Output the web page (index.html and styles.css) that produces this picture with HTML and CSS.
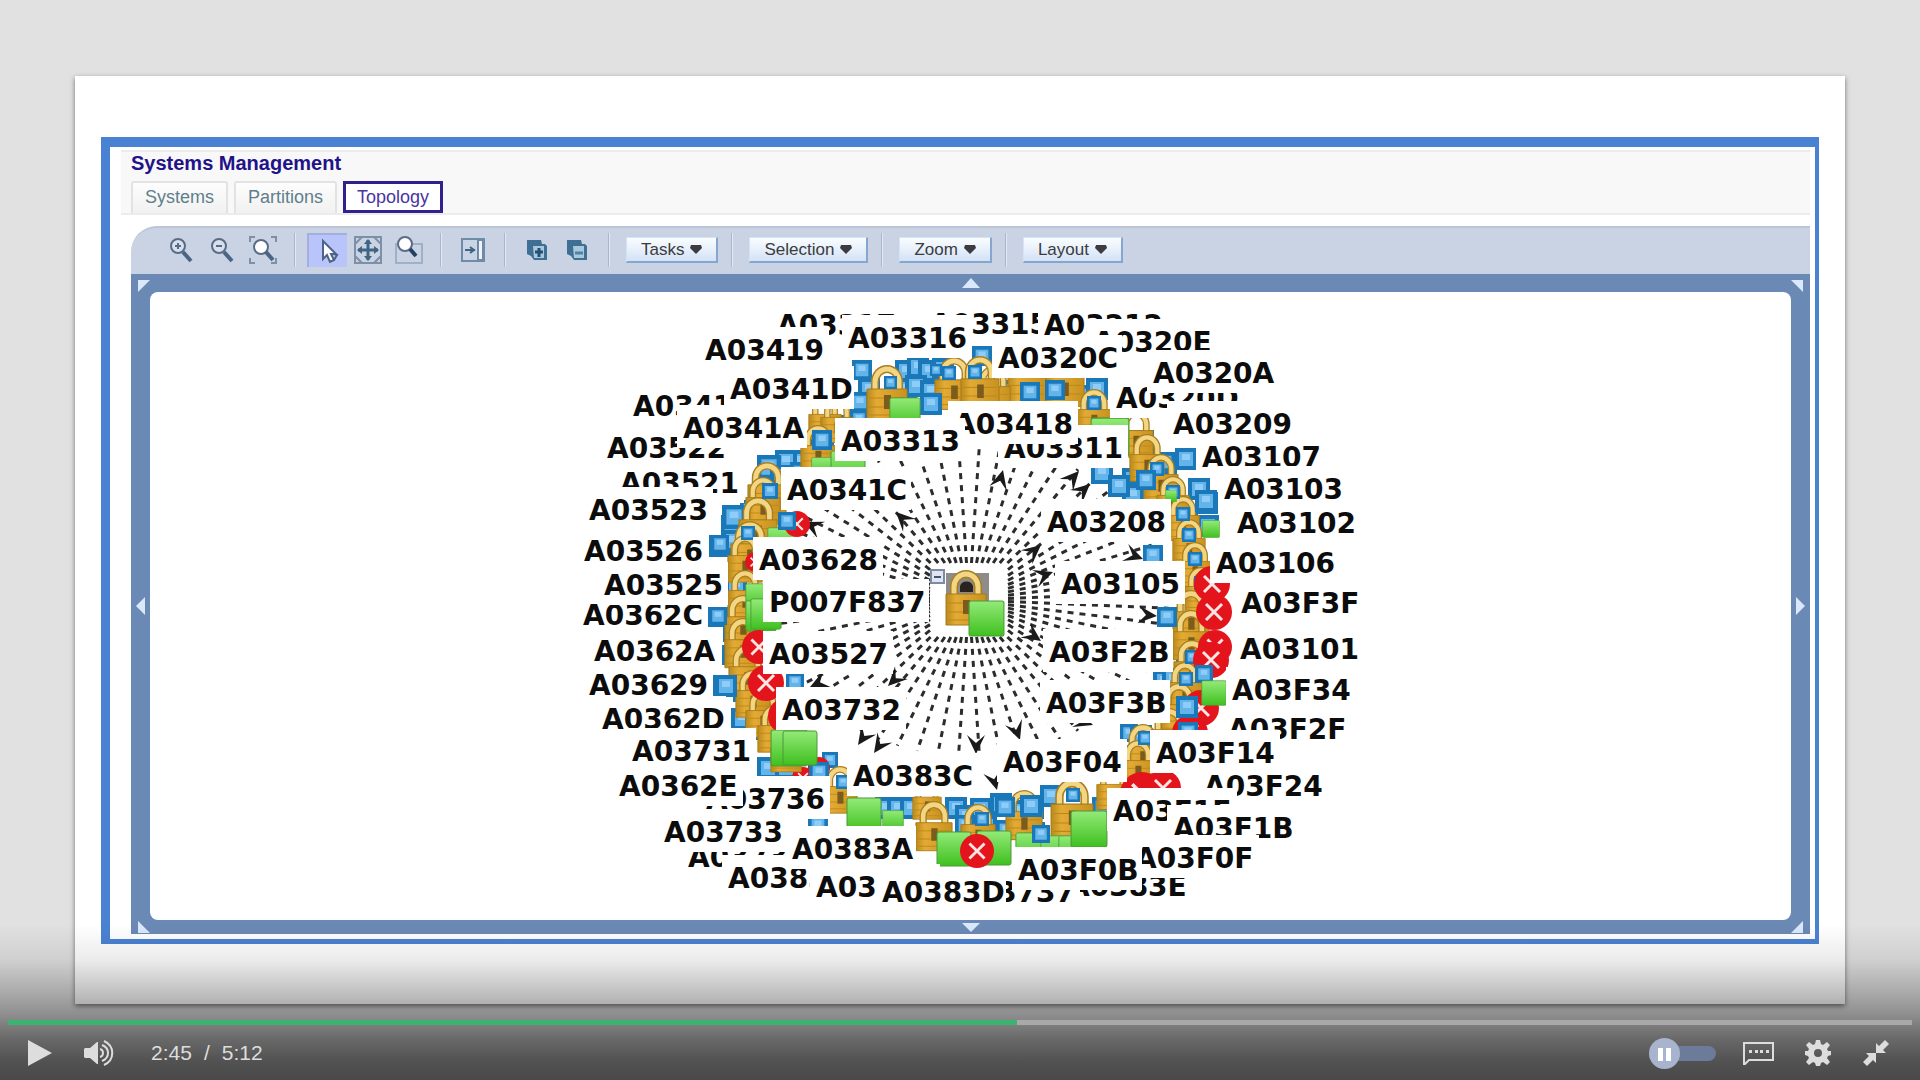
FILE: index.html
```html
<!DOCTYPE html>
<html lang="en">
<head>
<meta charset="utf-8">
<title>Systems Management - Topology</title>
<link rel="stylesheet" href="styles.css">
</head>
<body>
<main class="player">
  <article class="slide">
    <section class="window">
      <header class="window-head">
        <h1 class="title">Systems Management</h1>
        <nav class="tabs">
          <a class="tab" href="#systems">Systems</a>
          <a class="tab" href="#partitions">Partitions</a>
          <a class="tab tab-active" href="#topology">Topology</a>
        </nav>
      </header>
      <div class="toolbar">
        <div class="tools">
          <button class="tool" aria-label="Zoom in"><svg width="28" height="28" viewBox="0 0 28 28"><circle cx="11" cy="10" r="7" class="lens"/><path class="mark" d="M8 10h6M11 7v6"/><path class="handle" d="M16 16l8 9"/></svg></button>
          <button class="tool" aria-label="Zoom out"><svg width="28" height="28" viewBox="0 0 28 28"><circle cx="11" cy="10" r="7" class="lens"/><path class="mark" d="M8 10h6"/><path class="handle" d="M16 16l8 9"/></svg></button>
          <button class="tool" aria-label="Zoom to fit"><svg width="28" height="28" viewBox="0 0 28 28"><path class="thin" d="M1 6V1h5M22 1h5v5M27 22v5h-5M6 27H1v-5"/><circle cx="12" cy="11" r="7" class="lens lens-full"/><path class="handle" d="M17 16l7 8"/></svg></button>
        </div>
        <span class="rule"></span>
        <div class="tools">
          <button class="tool tool-on" aria-label="Select"><svg width="28" height="28" viewBox="0 0 28 28"><path d="M9 4v18l4-4 3 7 4-2-3-6h5z" fill="#fff" stroke="#4d6488" stroke-width="2"/><path d="M20 17l3 1-3 5" fill="none" stroke="#4d6488" stroke-width="2"/></svg></button>
          <button class="tool" aria-label="Pan"><svg width="28" height="28" viewBox="0 0 28 28"><path class="thin" d="M1 1h26v26H1zM1 8l7-7M20 1l7 7M1 20l7 7M20 27l7-7"/><path d="M14 4v20M4 14h20" stroke="#3f6585" stroke-width="3"/><path d="M10 8l4-5 4 5zM10 20l4 5 4-5zM8 10l-5 4 5 4zM20 10l5 4-5 4z" fill="#3f6585"/></svg></button>
          <button class="tool" aria-label="Magnify"><svg width="28" height="28" viewBox="0 0 28 28"><path class="thin soft" d="M1 8h26v19H1z"/><circle cx="10" cy="8" r="7" class="lens lens-full"/><path class="handle dark" d="M15 13l6 7"/></svg></button>
        </div>
        <span class="rule"></span>
        <div class="tools">
          <button class="tool" aria-label="Side panel"><svg width="26" height="26" viewBox="0 0 26 26"><path d="M2 2h22v22H2z" fill="#c9d5e6" stroke="#6f8ba6" stroke-width="2"/><path d="M18 3h5v20h-5z" fill="#eef4ff" stroke="#6f8ba6" stroke-width="2"/><path d="M5 13h10M10 10l4 3-4 3" fill="none" stroke="#3f6585" stroke-width="2"/></svg></button>
        </div>
        <span class="rule"></span>
        <div class="tools tools-tight">
          <button class="tool" aria-label="Expand all"><svg width="22" height="22" viewBox="0 0 22 22"><path d="M1 1h14l1 4h3l2 2v14H8l-3-4-4-2z" fill="#3f7093"/><path d="M7 7h11v12H8z" fill="#a9c8dc"/><path d="M13 9v9M9 13h8" stroke="#244f78" stroke-width="3"/></svg></button>
          <button class="tool" aria-label="Collapse all"><svg width="22" height="22" viewBox="0 0 22 22"><path d="M1 1h14l1 4h3l2 2v14H8l-3-4-4-2z" fill="#3f7093"/><path d="M7 7h11v12H8z" fill="#a9c8dc"/><path d="M9 14h8" stroke="#4c83a6" stroke-width="3"/></svg></button>
        </div>
        <span class="rule"></span>
        <button class="menu">Tasks <svg width="12" height="9" viewBox="0 0 12 9"><path d="M1 0h10l1 3-6 6-6-6z"/></svg></button>
        <span class="rule"></span>
        <button class="menu">Selection <svg width="12" height="9" viewBox="0 0 12 9"><path d="M1 0h10l1 3-6 6-6-6z"/></svg></button>
        <span class="rule"></span>
        <button class="menu">Zoom <svg width="12" height="9" viewBox="0 0 12 9"><path d="M1 0h10l1 3-6 6-6-6z"/></svg></button>
        <span class="rule"></span>
        <button class="menu">Layout <svg width="12" height="9" viewBox="0 0 12 9"><path d="M1 0h10l1 3-6 6-6-6z"/></svg></button>
      </div>
      <div class="viewport">
        <button class="pan pan-end-x pan-end-y" aria-label="Pan up left"><svg width="12" height="12" viewBox="0 0 12 12"><path d="M0 0h12L0 12z"/></svg></button>
        <button class="pan" aria-label="Pan up"><svg width="18" height="10" viewBox="0 0 18 10"><path d="M0 10L9 0l9 10z"/></svg></button>
        <button class="pan pan-start-x pan-end-y" aria-label="Pan up right"><svg width="12" height="12" viewBox="0 0 12 12"><path d="M0 0h12v12z"/></svg></button>
        <button class="pan" aria-label="Pan left"><svg width="9" height="18" viewBox="0 0 9 18"><path d="M9 0v18L0 9z"/></svg></button>
        <svg class="graph" viewBox="150 292 1641 628" role="img" aria-label="System topology">
          <defs>
            <linearGradient id="gold" x1="0" x2="1"><stop offset="0" stop-color="#b98a1c"/><stop offset=".25" stop-color="#e3ab35"/><stop offset="1" stop-color="#c8921f"/></linearGradient>
            <linearGradient id="leaf" x1="0" y1="0" x2="0" y2="1"><stop offset="0" stop-color="#93ea78"/><stop offset="1" stop-color="#3fc01f"/></linearGradient>
            <symbol id="lock" viewBox="0 0 42 56" width="42" height="56">
              <path d="M9 25V17a12 13 0 0 1 24 0v8" fill="none" stroke="#a87f22" stroke-width="8"/>
              <path d="M9 25V17a12 13 0 0 1 24 0v8" fill="none" stroke="#f3d684" stroke-width="5"/>
              <path d="M1 24h40v31H1z" fill="url(#gold)" stroke="#a87a18" stroke-width="1"/>
              <path d="M3 33h36M3 42h36M3 50h36" stroke="#bd8618" stroke-width="1"/>
              <path d="M18 30h7v14h-7z" fill="#7c5c1c"/>
            </symbol>
            <symbol id="blue" viewBox="0 0 22 22" width="22" height="22">
              <path d="M0 0h22v22H0z" fill="#1a78b8"/><path d="M4 4h14v14H4z" fill="#62b4ea"/><path d="M7 6h8v6H7z" fill="#8fcdf8"/>
            </symbol>
            <symbol id="green" viewBox="0 0 36 36" width="36" height="36">
              <rect x="1" y="1" width="34" height="34" rx="2" fill="url(#leaf)" stroke="#4b9a36" stroke-width="1"/>
            </symbol>
            <symbol id="fault" viewBox="0 0 36 36" width="36" height="36">
              <circle cx="18" cy="18" r="18" fill="#e3141b"/><path d="M10 10l16 16M26 10L10 26" stroke="#ffe4e4" stroke-width="3"/>
            </symbol>
          </defs>
          <g id="rays" class="rays"></g>
          <g id="nodes"></g>
          <g id="labels" class="labels"></g>
        </svg>
        <button class="pan" aria-label="Pan right"><svg width="9" height="18" viewBox="0 0 9 18"><path d="M0 0l9 9-9 9z"/></svg></button>
        <button class="pan pan-end-x" aria-label="Pan down left"><svg width="12" height="12" viewBox="0 0 12 12"><path d="M0 0l12 12H0z"/></svg></button>
        <button class="pan" aria-label="Pan down"><svg width="18" height="9" viewBox="0 0 18 9"><path d="M0 0h18L9 9z"/></svg></button>
        <button class="pan pan-start-x" aria-label="Pan down right"><svg width="12" height="12" viewBox="0 0 12 12"><path d="M12 0v12H0z"/></svg></button>
      </div>
    </section>
  </article>
  <div class="controls">
    <input class="seek" type="range" min="0" max="312" value="165" aria-label="Seek">
    <div class="bar">
      <button class="ctl ctl-play" aria-label="Play"><svg width="24" height="26" viewBox="0 0 24 26"><path d="M0 0l24 13L0 26z"/></svg></button>
      <button class="ctl ctl-volume" aria-label="Volume"><svg width="30" height="26" viewBox="0 0 30 26"><path d="M0 9l1-1h5l7-6h1v22h-1l-7-6H1l-1-1z"/><path class="wave" d="M16 9c4 1 4 7 0 8M18 5c8 3 8 13 0 16M20 1c11 5 11 19 0 24"/></svg></button>
      <div class="time"><span>2:45</span><span>/</span><span>5:12</span></div>
      <label class="autopause"><input class="autopause-box" type="checkbox" aria-label="Pause after each slide"><span class="knob"></span></label>
      <button class="ctl ctl-cc" aria-label="Captions"><svg width="32" height="24" viewBox="0 0 32 24"><path d="M1 2h29v17H6l-4 4H1z" fill="none" stroke="#ddd" stroke-width="2"/><path d="M6 9h3v3H6zM12 9h3v3h-3zM17 9h3v3h-3zM23 9h3v3h-3z"/></svg></button>
      <button class="ctl ctl-gear" aria-label="Settings"><svg width="26" height="26" viewBox="0 0 26 26"><path d="M10 4L11 0h4l1 4 2 1 4-3 3 3-3 4 1 2 3 0v4l-3 1-1 2 3 4-3 3-4-3-2 1-1 3h-4l-1-3-2-1-4 3-3-3 3-4-1-2-3-1v-4l3 0 1-2-3-4 3-3 4 3zM13 9a4 4 0 1 0 0 8 4 4 0 0 0 0-8z" fill-rule="evenodd"/></svg></button>
      <button class="ctl" aria-label="Exit full screen"><svg width="26" height="26" viewBox="0 0 26 26"><path d="M13 3l3 3 6-6 4 4-6 6 3 3H13zM13 13v10l-3-3-6 6-4-4 6-6-3-3z"/></svg></button>
    </div>
  </div>
</main>
<script src="script.js"></script>
</body>
</html>
```
FILE: styles.css
```css
* { box-sizing: border-box; }
body { margin: 0; background: #e1e1e1; font-family: "Liberation Sans", Arial, sans-serif; }
button { margin: 0; padding: 0; border: 0; background: none; font: inherit; cursor: pointer; }
svg { display: block; }
.player { position: relative; min-height: 100vh; padding: 76px 75px; background: #e1e1e1; }
.slide { padding: 61px 26px 60px; background: #fff; box-shadow: 0 2px 5px rgba(0, 0, 0, .5); }
.window { padding: 3px 5px 5px 11px; border: solid #4a82d3; border-width: 10px 4px 5px 9px; }

.window-head { padding-left: 10px; background: #f8f8f8; border: solid #ececec; border-width: 2px 0; }
.title { margin: 0; font-size: 20px; line-height: 22px; color: #22128a; }
.tabs { display: flex; gap: 6px; padding-top: 7px; }
.tab { height: 32px; padding: 0 12px; border: 2px solid #e2e2e2; border-bottom: 0; border-radius: 3px 3px 0 0; background: linear-gradient(#fdfdfd, #f1f1f1); font-size: 18px; line-height: 28px; color: #5f7f8b; text-decoration: none; }
.tab-active { padding: 0 11px; border: 3px solid #33208f; border-radius: 0; background: #fff; line-height: 26px; color: #4a35a0; }

.toolbar { display: flex; align-items: center; gap: 11px; height: 48px; margin: 11px 0 0 10px; padding: 0 0 2px 30px; border-top: 2px solid #bcc5d8; border-radius: 26px 0 0 0; background: #c9d3e4; }
.tools { display: flex; gap: 1px; }
.tools-tight { gap: 0; }
.tool { display: flex; align-items: center; justify-content: center; width: 40px; height: 34px; }
.tool-on { background: #b9c5fa; border: solid #a5aee0; border-width: 2px 0 0 2px; }
.rule { width: 2px; height: 34px; background: linear-gradient(90deg, #aab6cc 50%, #e2e8f4 50%); }
.lens { fill: #d6e0ee; stroke: #5a6b88; stroke-width: 2; }
.lens-full { fill: #fff; }
.mark { fill: none; stroke: #5a6b88; stroke-width: 2; }
.handle { stroke: #4a6684; stroke-width: 4; }
.dark { stroke: #26415f; }
.thin { fill: none; stroke: #7d90a8; stroke-width: 2; }
.soft { stroke: #9fb1c8; }
.menu { display: flex; align-items: center; justify-content: center; gap: 6px; height: 26px; margin: 0 2px 0 5px; padding: 0 14px; border: solid #d4e2f6; border-width: 1px 2px 2px 1px; border-right-color: #86a6cf; border-bottom-color: #86a6cf; background: linear-gradient(#fafdff, #d3e2f6); font-size: 17px; color: #3b3b40; }
.menu svg { fill: #3b3b40; }

.viewport { display: grid; grid-template-columns: 19px 1fr 19px; grid-template-rows: 18px auto 14px; margin-left: 10px; background: #6b89b5; }
.pan { display: flex; align-items: center; justify-content: center; min-width: 0; min-height: 0; }
.pan svg { flex: none; fill: #d9e9fb; }
.pan-end-x { justify-content: flex-end; }
.pan-start-x { justify-content: flex-start; }
.pan-end-y { align-items: flex-end; }
.graph { width: 100%; border-radius: 8px; background: #fff; }
.rays { fill: none; stroke: #2c2c2c; stroke-width: 3; }
.rays path { stroke-dasharray: 6 6; }
.rays .tip { fill: #1a1a1a; stroke: none; }
.labels { font: bold 28px "DejaVu Sans", sans-serif; fill: #0c0c0c; }
.labels rect { fill: #fff; }

.controls { position: absolute; left: 0; right: 0; bottom: 0; padding: 96px 8px 5px; background: linear-gradient(rgba(0, 0, 0, 0), rgba(0, 0, 0, .08) 23%, rgba(0, 0, 0, .27) 47%, rgba(0, 0, 0, .39) 60%, rgba(0, 0, 0, .53) 73%, rgba(0, 0, 0, .63) 87%, rgba(0, 0, 0, .68)); }
.seek { display: block; appearance: none; width: 100%; height: 5px; margin: 0; background: linear-gradient(90deg, #3cb371 53%, #a9a9a9 53%); }
.seek::-webkit-slider-thumb { appearance: none; width: 0; height: 0; }
.bar { display: flex; align-items: center; height: 44px; margin-top: 6px; padding: 0 23px 0 20px; }
.ctl { fill: #ddd; }
.ctl-play { margin-right: 32px; }
.ctl-volume { margin-right: 37px; }
.wave { fill: none; stroke: #ddd; stroke-width: 2; }
.time { display: flex; gap: 12px; margin-right: auto; font-size: 21px; line-height: 24px; color: #ddd; }
.autopause { position: relative; display: flex; align-items: center; width: 67px; height: 31px; margin-right: 27px; }
.autopause-box { appearance: none; width: 60px; height: 15px; margin: 0 0 0 7px; border-radius: 8px; background: #6c7b99; }
.knob { position: absolute; left: 0; top: 0; width: 31px; height: 31px; border-radius: 50%; background: linear-gradient(#fff, #fff) 9px 10px / 5px 13px no-repeat, linear-gradient(#fff, #fff) 17px 10px / 5px 13px no-repeat, #a8b4cd; }
.ctl-cc { margin-right: 30px; }
.ctl-gear { margin-right: 32px; }
```
FILE: script.js
```js
const NS = "http://www.w3.org/2000/svg";

function add(parent, name, attrs, text) {
  const el = document.createElementNS(NS, name);
  for (const key in attrs) el.setAttribute(key, attrs[key]);
  if (text) el.textContent = text;
  parent.appendChild(el);
}

// Hub of the graph and the clear box round it
const hub = { x: 969, y: 600, w: 39, h: 37 };
const rays = document.getElementById("rays");

function ray(x, y) {
  const dx = x - hub.x, dy = y - hub.y;
  const k = 1 / Math.max(Math.abs(dx) / hub.w, Math.abs(dy) / hub.h);
  add(rays, "path", { d: `M${hub.x + dx * k} ${hub.y + dy * k}L${x} ${y}` });
}

for (let deg = 3; deg < 360; deg += 6) {
  const a = deg * Math.PI / 180;
  ray(hub.x + 200 * Math.cos(a), hub.y + 156 * Math.sin(a));
}

// Arrow heads: x, y, direction in degrees
[[1003, 470, -75], [1079, 471, -48], [1090, 484, -42], [896, 512, -135], [804, 522, -155],
 [1041, 545, -40], [1053, 572, -20], [1041, 641, 35], [1157, 616, 5], [888, 686, 135],
 [858, 745, 125], [874, 753, 125], [976, 754, 90], [1020, 740, 70], [997, 790, 75],
 [810, 687, 155], [1093, 725, 20], [1143, 559, 20]
].forEach(([x, y, deg]) =>
  add(rays, "path", { class: "tip", d: "M0 0L-19 -9L-11 0L-19 9Z", transform: `translate(${x} ${y}) rotate(${deg})` }));

// Nodes, back to front: kind, then x y size triples (top left corner, width)
const nodes = [
  ["blue", [852,360,20, 895,360,22, 907,356,22, 918,360,22, 932,358,22, 895,378,22, 905,375,22, 920,380,22, 940,385,22, 972,346,20, 1000,380,22, 1012,385,20, 1035,378,20, 1054,378,22, 1070,385,20, 1086,378,22, 858,378,22, 850,410,18, 850,392,20, 808,435,26, 828,415,20, 840,425,22, 790,450,22, 775,450,22, 757,455,24, 770,465,24, 790,462,20, 740,500,20, 721,515,20, 709,535,22, 765,480,22, 735,505,22, 778,512,20, 722,505,24, 722,530,22, 725,575,22, 708,607,20, 723,620,22, 722,645,20, 713,675,22, 733,680,22, 731,708,22, 745,718,22, 757,757,22, 775,757,22, 822,752,16, 808,762,20]],
  ["blue", [1130,430,24, 1132,442,22, 1155,452,20, 1175,448,22, 1091,462,22, 1108,475,22, 1122,468,22, 1122,480,22, 1134,467,22, 1145,490,22, 1122,484,22, 1155,470,22, 1188,478,22, 1196,492,22, 1176,505,22, 1197,515,22, 1143,545,20, 1178,530,22, 1183,552,22, 1185,575,24, 1158,607,20, 1176,620,22, 1176,640,22, 1153,670,22, 1162,668,22, 1195,668,18, 1120,724,18, 1130,725,22, 1125,745,22, 1177,720,22, 1040,785,22]],
  ["blue", [875,797,22, 887,797,22, 900,797,22, 945,797,22, 955,805,22, 970,798,22, 990,793,22, 1010,800,22, 1022,797,22, 955,815,20, 975,815,22, 996,820,20, 1010,812,22, 1025,822,20, 1092,797,20, 808,815,20, 1060,830,18]],
  ["fault", [808,757,22, 792,767,22]],
  ["lock", [808,395,34, 820,398,34, 1007,354,40, 1045,354,40, 975,366,36, 934,357,40, 960,356,40, 800,425,36, 747,462,40, 745,477,36, 738,497,40, 730,521,40, 727,535,36, 727,570,36, 724,595,38, 724,618,38, 728,645,38, 735,670,36, 745,690,36, 757,705,36, 770,730,32]],
  ["lock", [1118,410,36, 1129,434,36, 1143,454,36, 1156,476,34, 1166,496,34, 1172,519,34, 1178,542,34, 1184,567,34, 1172,590,38, 1172,610,38, 1173,640,38, 1167,662,36, 1160,683,38, 1124,724,38, 1120,740,36, 1150,708,38]],
  ["lock", [1096,765,34, 960,804,36, 1005,790,38, 912,780,30, 915,801,38]],
  ["lock", [866,365,42, 1076,389,36, 822,766,36, 1050,779,44]],
  ["blue", [968,365,14, 942,366,14, 884,376,13, 1087,396,14, 762,483,16, 741,526,14, 1150,462,14, 1166,485,14, 1176,507,14, 1182,528,14, 1188,552,14, 1194,576,14, 1185,650,14, 1179,672,14, 1138,731,14, 1066,788,14, 975,812,14, 836,775,14, 1136,470,20, 1195,490,22, 1108,475,22, 1045,380,20, 1020,382,20, 930,364,12, 920,393,22, 812,430,20]],
  ["green", [889,397,32, 811,457,22, 830,450,36, 767,527,28, 745,583,28, 745,600,32, 750,598,32, 1090,417,40, 1202,520,18, 1165,490,12]],
  ["fault", [784,511,26, 745,552,20, 742,630,34, 1194,566,36, 1198,630,34, 1193,642,36, 1183,690,36, 1172,715,36, 768,698,36, 748,665,36, 1120,772,44, 1145,770,36, 1196,594,36]],
  ["blue", [709,607,18, 778,512,18, 715,675,22, 1157,607,20, 1176,696,22, 1195,665,18, 786,673,18, 711,535,18, 809,762,20, 1178,722,20]],
  ["green", [770,729,38, 782,730,36, 1201,680,26, 846,797,36, 882,810,22, 1015,832,32, 1040,835,30, 1058,835,30, 936,831,36, 976,830,36]],
  ["fault", [960,834,34]],
  ["blue", [995,797,20, 1020,795,22, 1032,825,18]],
  ["green", [1070,810,38]]
];
const layer = document.getElementById("nodes");
const ratio = { lock: 56 / 42, blue: 1, green: 1, fault: 1 };
for (const [kind, list] of nodes) {
  for (let i = 0; i < list.length; i += 3) {
    const w = list[i + 2];
    add(layer, "use", { href: "#" + kind, x: list[i], y: list[i + 1], width: w, height: w * ratio[kind] });
  }
}

// The hub itself
add(layer, "rect", { x: 946, y: 573, width: 43, height: 52, fill: "#8d8c88" });
add(layer, "use", { href: "#lock", x: 945, y: 570, width: 42, height: 56 });
add(layer, "path", { d: "M960 592v-6a7 7 0 0 1 13 0v6z", fill: "#2b2320" });
add(layer, "use", { href: "#green", x: 968, y: 600, width: 37, height: 37 });

// System labels, back to front: name, left edge, baseline
const labels = [
  ["A03315", 930, 334], ["A03317", 777, 335], ["A03212", 1044, 335], ["A0320E", 1093, 352],
  ["A03316", 848, 348], ["A03419", 705, 360], ["A0320C", 998, 368], ["A0320D", 1116, 408],
  ["A0320A", 1153, 383], ["A0341B", 633, 416], ["A0341D", 730, 399], ["A03522", 607, 458],
  ["A0341A", 683, 438], ["A03521", 620, 493], ["A03523", 589, 520], ["A03526", 584, 561],
  ["A0362C", 583, 625], ["A03525", 604, 595], ["A03311", 1004, 458], ["A03418", 954, 434],
  ["A03313", 841, 451], ["A0341C", 787, 500], ["A03628", 759, 570], ["P007F837", 769, 612],
  ["A0362A", 594, 661], ["A03629", 589, 695], ["A0362D", 602, 729], ["A03731", 632, 761],
  ["A03736", 706, 809], ["A0362E", 619, 796], ["A03735", 688, 867], ["A03733", 664, 842],
  ["A03830", 728, 888], ["A0383B", 816, 897], ["A0383E", 1068, 896], ["A03737", 956, 902],
  ["A0383D", 882, 902], ["A0383A", 792, 859], ["A0383C", 853, 786], ["A03732", 782, 720],
  ["A03527", 769, 664], ["A03209", 1173, 434], ["A03107", 1202, 467], ["A03103", 1224, 499],
  ["A03102", 1237, 533], ["A03106", 1216, 573], ["A03105", 1061, 594], ["A03208", 1047, 532],
  ["A03F3F", 1241, 613], ["A03101", 1240, 659], ["A03F34", 1232, 700], ["A03F2F", 1228, 739],
  ["A03F24", 1204, 796], ["A03F14", 1156, 763], ["A03F1F", 1113, 821], ["A03F1B", 1173, 838],
  ["A03F0F", 1135, 868], ["A03F0B", 1018, 880], ["A03F2B", 1049, 662], ["A03F3B", 1046, 713],
  ["A03F04", 1003, 772]
];
const names = document.getElementById("labels");
for (const [name, x, y] of labels) {
  add(names, "rect", { x: x - 6, y: y - 33, width: name.length === 8 ? 166 : 130, height: 43 });
  add(names, "text", { x, y }, name);
}

// Collapse handle of the hub
add(names, "path", { d: "M931 570h13v13h-13z", fill: "#dfe6f0", stroke: "#7b8ba6", "stroke-width": 2 });
add(names, "path", { d: "M934 577h7", stroke: "#42536e", "stroke-width": 2 });
```
